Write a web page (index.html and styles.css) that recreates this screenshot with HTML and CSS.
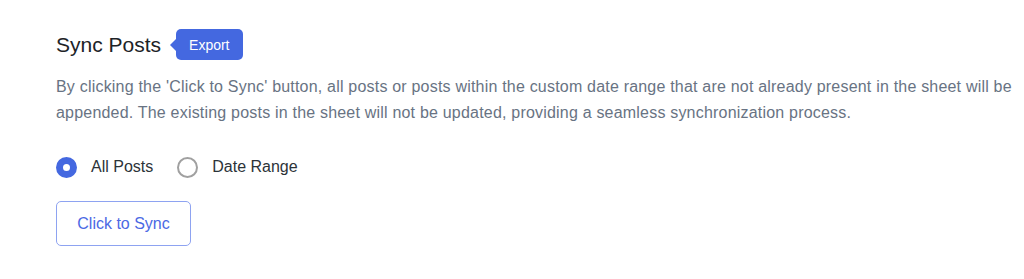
FILE: index.html
```html
<!DOCTYPE html>
<html lang="en">
<head>
<meta charset="utf-8">
<title>Sync Posts</title>
<link rel="stylesheet" href="styles.css">
</head>
<body>
<section class="sync">
  <div class="sync-head">
    <h2 class="sync-title">Sync Posts</h2>
    <span class="badge">Export</span>
  </div>
  <p class="sync-desc">By clicking the 'Click to Sync' button, all posts or posts within the custom date range that are not already present in the sheet will be appended. The existing posts in the sheet will not be updated, providing a seamless synchronization process.</p>
  <div class="radios">
    <label class="radio"><input type="radio" name="range" checked><span class="dot"></span>All Posts</label>
    <label class="radio"><input type="radio" name="range"><span class="dot"></span>Date Range</label>
  </div>
  <button class="btn" type="button">Click to Sync</button>
</section>
</body>
</html>
```
FILE: styles.css
```css
html, body {
  margin: 0;
  padding: 0;
  background: #ffffff;
}
body {
  font-family: "Liberation Sans", Arial, sans-serif;
}
.sync {
  padding: 29px 8px 0 56px;
}
.sync-head {
  display: flex;
  align-items: center;
  height: 31px;
}
.sync-title {
  margin: 0;
  font-size: 21px;
  font-weight: 400;
  color: #1d2327;
  line-height: 31px;
}
.badge {
  position: relative;
  margin-left: 15px;
  height: 31px;
  padding: 0 13px;
  box-sizing: border-box;
  display: flex;
  align-items: center;
  background: #4468e0;
  color: #ffffff;
  font-size: 14px;
  border-radius: 5px;
}
.badge::before {
  content: "";
  position: absolute;
  left: -6px;
  top: 50%;
  margin-top: -6px;
  border-top: 6px solid transparent;
  border-bottom: 6px solid transparent;
  border-right: 6px solid #4468e0;
}
.sync-desc {
  margin: 14px 0 0;
  font-size: 16px;
  line-height: 26px;
  letter-spacing: 0.2px;
  color: #687383;
}
.radios {
  display: flex;
  align-items: center;
  gap: 24px;
  margin-top: 28px;
  height: 26px;
}
.radio {
  display: flex;
  align-items: center;
  gap: 14px;
  font-size: 16px;
  color: #2c3338;
  cursor: pointer;
}
.radio input {
  display: none;
}
.dot {
  width: 21px;
  height: 21px;
  box-sizing: border-box;
  border-radius: 50%;
  border: 2px solid #a0a0a0;
  background: #ffffff;
}
.radio input:checked + .dot {
  border: 7px solid #4468e0;
}
.btn {
  display: block;
  margin-top: 21px;
  width: 135px;
  height: 45px;
  padding: 0;
  background: #ffffff;
  border: 1px solid #8ea3f1;
  border-radius: 5px;
  color: #4c69e4;
  font-family: "Liberation Sans", Arial, sans-serif;
  font-size: 16px;
  cursor: pointer;
}
```
